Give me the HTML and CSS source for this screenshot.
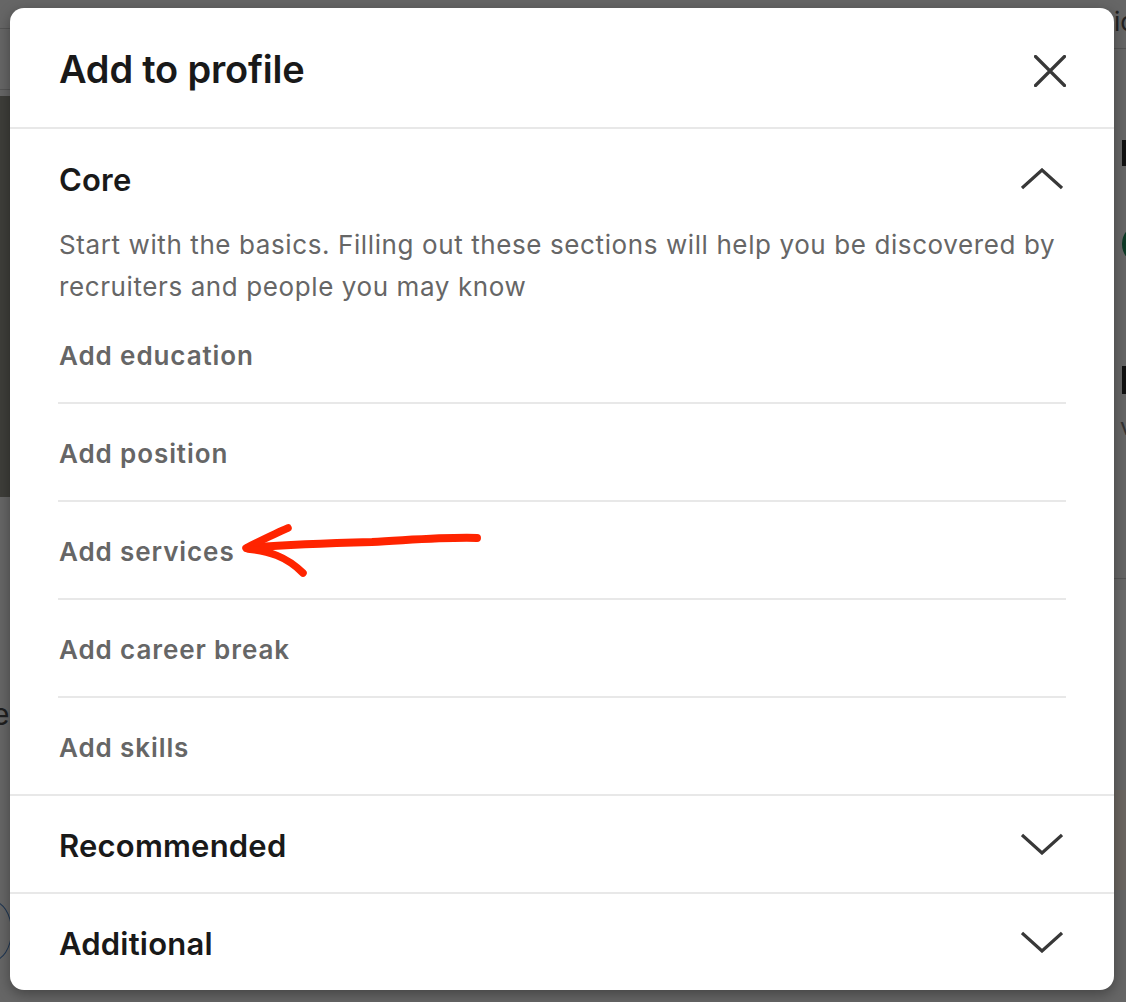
FILE: index.html
```html
<!DOCTYPE html>
<html lang="en">
<head>
<meta charset="utf-8">
<title>Add to profile</title>
<link rel="stylesheet" href="styles.css">
</head>
<body>
<div class="backdrop">
  <div class="bg-img-left"></div>
  <div class="bg-line bg-line-l1"></div>
  <div class="bg-line bg-line-l2"></div>
  <div class="bg-glyph-e">e</div>
  <div class="bg-arc"></div>
  <div class="bg-glyph-ic">ic</div>
  <div class="bg-line bg-line-r1"></div>
  <div class="bg-bar-r1"></div>
  <div class="bg-circle-r"></div>
  <div class="bg-bar-r2"></div>
  <div class="bg-glyph-v">v</div>
  <div class="bg-line bg-line-r2"></div>
  <div class="bg-block-r1"></div>
  <div class="bg-block-r2"></div>
</div>

<div class="modal" role="dialog" aria-labelledby="modal-title">
  <header class="modal-header">
    <h2 id="modal-title" class="modal-title">Add to profile</h2>
    <button class="icon-btn close-btn" aria-label="Dismiss">
      <svg width="32" height="32" viewBox="0 0 32 32"><path d="M1.5 1.5 L30.5 30.5 M30.5 1.5 L1.5 30.5" stroke="#383838" stroke-width="3.2" stroke-linecap="round" fill="none"/></svg>
    </button>
  </header>

  <section class="section section-open">
    <div class="section-head core-head">
      <h3 class="section-title">Core</h3>
      <svg class="chevron" width="42" height="22" viewBox="0 0 42 22"><path d="M1 20 L21 2 L41 20" stroke="#383838" stroke-width="3.2" fill="none"/></svg>
    </div>
    <p class="section-desc">Start with the basics. Filling out these sections will help you be discovered by recruiters and people you may know</p>
    <ul class="item-list">
      <li class="item">Add education</li>
      <li class="item">Add position</li>
      <li class="item item-services">Add services</li>
      <li class="item">Add career break</li>
      <li class="item">Add skills</li>
    </ul>
  </section>

  <section class="section">
    <div class="section-head">
      <h3 class="section-title">Recommended</h3>
      <svg class="chevron" width="42" height="22" viewBox="0 0 42 22"><path d="M1 2 L21 20 L41 2" stroke="#383838" stroke-width="3.2" fill="none"/></svg>
    </div>
  </section>

  <section class="section section-last">
    <div class="section-head">
      <h3 class="section-title">Additional</h3>
      <svg class="chevron" width="42" height="22" viewBox="0 0 42 22"><path d="M1 2 L21 20 L41 2" stroke="#383838" stroke-width="3.2" fill="none"/></svg>
    </div>
  </section>
</div>

<svg class="annotation-arrow" width="260" height="70" viewBox="0 0 260 70">
  <path d="M237 22 C 205 21, 172 24, 132 26 C 92 27, 52 28, 8 32" stroke="#ff2400" stroke-width="8" stroke-linecap="round" fill="none"/>
  <path d="M6 32 C 22 24, 36 17, 48 12" stroke="#ff2400" stroke-width="7.5" stroke-linecap="round" fill="none"/>
  <path d="M8 33 C 28 35, 46 40, 63 57" stroke="#ff2400" stroke-width="7.5" stroke-linecap="round" fill="none"/>
</svg>
</body>
</html>
```

FILE: styles.css
```css
html, body {
  margin: 0;
  padding: 0;
}
body {
  background: #666666;
  width: 1126px;
  height: 1002px;
  overflow: hidden;
  position: relative;
  font-family: Inter, "Noto Sans", "Liberation Sans", sans-serif;
}

/* dimmed page behind the dialog */
.backdrop {
  position: absolute;
  inset: 0;
}
.bg-img-left {
  position: absolute;
  left: 0; top: 96px;
  width: 10px; height: 401px;
  background: #3e3e3a;
}
.bg-line {
  position: absolute;
  height: 1px;
  background: #555;
}
.bg-line-l1 { left: 0; top: 28px; width: 10px; }
.bg-line-l2 { left: 0; top: 89px; width: 10px; }
.bg-glyph-e {
  position: absolute;
  left: -8px; top: 696px;
  font-size: 30px;
  color: #1f1f1f;
}
.bg-arc {
  position: absolute;
  left: -30px; top: 900px;
  width: 40px; height: 60px;
  border: 1px solid #1d3552;
  border-radius: 50%;
}
.bg-glyph-ic {
  position: absolute;
  left: 1114px; top: 6px;
  font-size: 26px;
  color: #222;
}
.bg-line-r1 { left: 1114px; top: 48px; width: 12px; }
.bg-line-r2 { left: 1114px; top: 578px; width: 12px; }
.bg-bar-r1 {
  position: absolute;
  left: 1122px; top: 140px; width: 4px; height: 26px;
  background: #111;
}
.bg-circle-r {
  position: absolute;
  left: 1122px; top: 226px; width: 30px; height: 36px;
  border-radius: 50%;
  background: #0e3a26;
}
.bg-bar-r2 {
  position: absolute;
  left: 1122px; top: 366px; width: 4px; height: 28px;
  background: #111;
}
.bg-glyph-v {
  position: absolute;
  left: 1120px; top: 412px;
  font-size: 24px;
  color: #333;
}
.bg-block-r1 {
  position: absolute;
  left: 1114px; top: 590px; width: 12px; height: 100px;
  background: #6c6c6c;
}
.bg-block-r2 {
  position: absolute;
  left: 1114px; top: 790px; width: 12px; height: 100px;
  background: #6b6661;
}

/* dialog */
.modal {
  position: relative;
  margin: 8px 0 0 10px;
  width: 1104px;
  height: 982px;
  background: #ffffff;
  border-radius: 14px;
  box-shadow: 0 4px 14px rgba(0, 0, 0, 0.35);
  overflow: hidden;
  box-sizing: border-box;
}
.modal-header {
  height: 119px;
  border-bottom: 2px solid #e8e8e8;
  display: flex;
  align-items: center;
  justify-content: space-between;
  padding: 0 48px 0 49px;
  box-sizing: content-box;
}
.modal-title {
  margin: 0;
  font-size: 38px;
  font-weight: 600;
  color: #191919;
  letter-spacing: -0.2px;
  padding-top: 2px;
}
.icon-btn {
  background: none;
  border: 0;
  padding: 0;
  display: flex;
}
.close-btn {
  margin-top: 6px;
}

.section {
  border-bottom: 2px solid #e8e8e8;
}
.section-last {
  border-bottom: 0;
}
.section-head {
  height: 96px;
  display: flex;
  align-items: center;
  justify-content: space-between;
  padding: 0 51px 0 49px;
}
.core-head {
  padding-top: 4px;
  box-sizing: border-box;
  height: 95px;
}
.section-title {
  margin: 0;
  font-size: 31px;
  font-weight: 600;
  color: #191919;
  letter-spacing: 0.2px;
  padding-top: 2px;
}
.chevron {
  display: block;
}
.section-desc {
  margin: 0;
  padding: 0 48px 0 49px;
  font-size: 26px;
  line-height: 42px;
  letter-spacing: 0.6px;
  color: #666666;
  height: 82px;
}
.item-list {
  list-style: none;
  margin: 0;
  padding: 0 48px;
}
.item {
  height: 96px;
  display: flex;
  align-items: center;
  padding-left: 1px;
  padding-top: 3px;
  box-sizing: border-box;
  height: 96px;
  border-bottom: 2px solid #e8e8e8;
  font-size: 26px;
  font-weight: 600;
  letter-spacing: 0.9px;
  color: #666666;
}
.item:last-child {
  border-bottom: 0;
}
.item:not(:last-child) {
  height: 98px;
}

.annotation-arrow {
  position: absolute;
  left: 240px;
  top: 516px;
}
```
